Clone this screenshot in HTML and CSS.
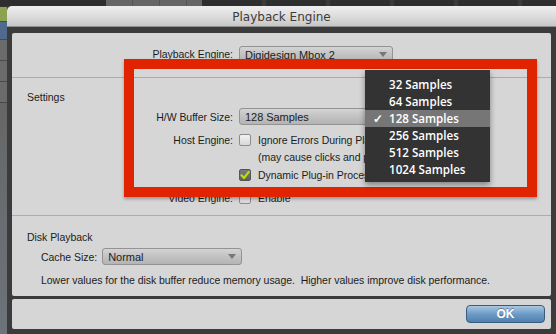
FILE: index.html
```html
<!DOCTYPE html>
<html lang="en">
  <head>
    <meta charset="UTF-8" />
    <meta name="viewport" content="width=device-width, initial-scale=1.0" />
    <title>Playback Engine</title>
    <link rel="stylesheet" href="styles.css">
  </head>

  <body>
    <div class="screen">
      <!-- Background app behind the dialog -->
      <div class="topbar">
        <span class="tb-dark"></span>
        <span class="tb-light"></span>
        <span class="tb-dark"></span>
      </div>
      <div class="sidebar">
        <span class="strip strip-gap"></span>
        <span class="strip strip-green"></span>
        <span class="strip strip-blue"></span>
        <span class="strip strip-gray"></span>
        <span class="strip strip-gray"></span>
        <span class="strip strip-gray"></span>
        <span class="strip strip-low"></span>
      </div>

      <!-- Dialog -->
      <div class="dialog">
        <div class="titlebar">Playback Engine</div>

        <div class="panel">
          <div class="engine-row row">
            <span class="label">Playback Engine:</span>
            <div class="popup">Digidesign Mbox 2</div>
          </div>

          <div class="group settings">
            <div class="group-title">Settings</div>
            <div class="row hw-row">
              <span class="label">H/W Buffer Size:</span>
              <div class="popup">128 Samples</div>
            </div>
            <div class="row check-row host-row">
              <span class="label">Host Engine:</span>
              <span class="checkbox"></span>
              <span class="clip">Ignore Errors During Playback/Record</span>
            </div>
            <div class="row check-row">
              <span class="label"></span>
              <span class="clip note">(may cause clicks and pops)</span>
            </div>
            <div class="row check-row dyn-row">
              <span class="label"></span>
              <span class="checkbox checked">
                <svg viewBox="0 0 12 12" width="12" height="12">
                  <path d="M2.5 6.2 L5 9 L9.8 2.8" fill="none" stroke="#b6e000" stroke-width="2.2" stroke-linecap="round" stroke-linejoin="round" />
                </svg>
              </span>
              <span class="clip">Dynamic Plug-in Processing</span>
            </div>
            <div class="row check-row video-row">
              <span class="label">Video Engine:</span>
              <span class="checkbox"></span>
              <span>Enable</span>
            </div>
          </div>

          <div class="group disk">
            <div class="group-title">Disk Playback</div>
            <div class="cache-row">
              <span>Cache Size:</span>
              <div class="popup small">Normal</div>
            </div>
            <p class="hint">Lower values for the disk buffer reduce memory usage.&nbsp; Higher values improve disk performance.</p>
          </div>
        </div>

        <div class="footer">
          <button class="ok">OK</button>
        </div>
      </div>

      <!-- Annotation and open menu lie over the dialog -->
      <div class="highlight-box"></div>
      <ul class="menu">
        <li>32 Samples</li>
        <li>64 Samples</li>
        <li class="selected"><span class="tick">&#10003;</span>128 Samples</li>
        <li>256 Samples</li>
        <li>512 Samples</li>
        <li>1024 Samples</li>
      </ul>
    </div>
  </body>
</html>
```

FILE: styles.css
```css
/* General */

body {
  margin: 0;
  padding: 0;
  background-color: #333;
  font-family: "Liberation Sans", Arial, sans-serif;
  font-size: 10.5px;
  letter-spacing: -0.04px;
  color: #1c1c1c;
}

.screen {
  position: relative;
  width: 556px;
  height: 334px;
  overflow: hidden;
  display: grid;
  grid-template-columns: 7px 1fr;
  grid-template-rows: 6px 1fr;
}

/* Background app */

.topbar {
  grid-column: 1 / 3;
  display: flex;
  background: #2c2c2c;
}

.tb-dark {
  width: 106px;
  background: #2e2e2e;
}

.tb-light {
  width: 96px;
  background: repeating-linear-gradient(90deg, #666 0, #666 26px, #555 26px, #555 27px);
}

.tb-dark:last-child {
  flex: 1;
  background: repeating-linear-gradient(90deg, #2e2e2e 0, #2e2e2e 60px, #3b3b3b 60px, #3b3b3b 64px);
}

.sidebar {
  display: flex;
  flex-direction: column;
  background: #63676d;
}

.strip {
  display: block;
  border-bottom: 1px solid #4a4a4a;
}

.strip-gap {
  height: 1px;
  background: #333;
  border: none;
}

.strip-green {
  height: 14px;
  background: #8ba251;
}

.strip-blue {
  height: 17px;
  background: #4f6a8d;
}

.strip-gray {
  height: 20px;
  background: #6b6b6b;
}

.strip-low {
  flex: 1;
  background: linear-gradient(#666, #6d737b);
  border: none;
}

/* Dialog */

.dialog {
  display: flex;
  flex-direction: column;
  background: #3b3b3b;
}

.titlebar {
  height: 21px;
  line-height: 22px;
  text-align: center;
  font-family: "DejaVu Sans", sans-serif;
  font-size: 12px;
  letter-spacing: 0;
  color: #3c3c3c;
  background: linear-gradient(#efefef, #d9d9d9 60%, #c6c6c6);
  border-top-left-radius: 5px;
  border-bottom: 1px solid #8e8e8e;
  box-sizing: border-box;
}

.panel {
  height: 263px;
  margin: 6px 5px 0 5px;
  background: #d6d6d6;
  border-radius: 2px;
}

.footer {
  height: 30px;
  margin: 3px 5px 5px 5px;
  background: #d6d6d6;
  border-radius: 2px;
  display: flex;
  align-items: center;
  justify-content: flex-end;
  padding-right: 6px;
}

/* Rows */

.row {
  display: flex;
  align-items: center;
  gap: 5px;
}

.label {
  width: 221px;
  flex-shrink: 0;
  text-align: right;
}

.engine-row {
  height: 45px;
  padding-top: 13px;
  align-items: flex-start;
  box-sizing: border-box;
  border-bottom: 1px solid #ababab;
}

.engine-row .label {
  line-height: 17px;
}

.group {
  border-bottom: 1px solid #ababab;
}

.group-title {
  height: 14px;
  line-height: 14px;
  padding-left: 15px;
}

.settings {
  height: 138px;
  padding-top: 12px;
  box-sizing: border-box;
}

.hw-row {
  margin-top: 4px;
}

.check-row {
  height: 17px;
  white-space: nowrap;
}

.check-row .checkbox {
  margin-left: 1px;
}

/* text running under the open menu is cut at its left edge */
.clip {
  width: 107px;
  overflow: hidden;
}

.host-row {
  margin-top: 6px;
}

.note {
  margin-left: 20px;
}

.dyn-row {
  margin-top: 1px;
}

.video-row {
  margin-top: 6px;
}

.disk {
  border-bottom: none;
  padding-top: 14px;
}

.cache-row {
  display: flex;
  align-items: center;
  gap: 4px;
  margin-top: 4px;
  padding-left: 29px;
}

.hint {
  margin: 8px 0 0 29px;
  line-height: 14px;
}

/* Controls */

.popup {
  position: relative;
  width: 154px;
  height: 17px;
  line-height: 17px;
  box-sizing: border-box;
  padding-left: 5px;
  border: 1px solid #939393;
  border-radius: 3px;
  background: linear-gradient(#d4d4d4, #c2c2c2 50%, #b4b4b4);
  margin-left: 1px;
  font-size: 11px;
}

.popup::after {
  content: "";
  position: absolute;
  right: 5px;
  top: 5px;
  border-left: 4px solid transparent;
  border-right: 4px solid transparent;
  border-top: 5px solid #777;
}

.popup.small {
  width: 140px;
}

.checkbox {
  width: 12px;
  height: 12px;
  box-sizing: border-box;
  border: 1px solid #8c8c8c;
  border-radius: 2px;
  background: linear-gradient(#f2f2f2, #d8d8d8);
  margin-right: 2px;
  flex-shrink: 0;
}

.checkbox.checked {
  background: linear-gradient(#7c7c7c, #5e5e5e);
  border-color: #555;
  position: relative;
}

.checkbox.checked svg {
  position: absolute;
  left: -1px;
  top: -1px;
}

.ok {
  width: 79px;
  height: 18px;
  padding: 0;
  border: 1px solid #3a5c80;
  border-radius: 4px;
  background: linear-gradient(#a9c7e4, #6d9bc6 50%, #4e7fae);
  color: white;
  font-family: "Liberation Sans", Arial, sans-serif;
  font-weight: bold;
  font-size: 12px;
  text-shadow: 0 -1px 0 rgba(0, 0, 0, 0.35);
}

/* Overlays */

.highlight-box {
  position: absolute;
  left: 124px;
  top: 59px;
  width: 413px;
  height: 138px;
  box-sizing: border-box;
  border: 10px solid #e12400;
  box-shadow: 0 2px 3px rgba(0, 0, 0, 0.3);
}

.menu {
  position: absolute;
  left: 365px;
  top: 70px;
  width: 125px;
  height: 112px;
  box-sizing: border-box;
  margin: 0;
  padding: 6px 0 4px 0;
  list-style: none;
  background: rgba(44, 44, 44, 0.96);
  box-shadow: 0 3px 6px rgba(0, 0, 0, 0.4);
  font-family: "Open Sans", sans-serif;
  font-weight: 600;
  font-size: 11.6px;
  letter-spacing: 0;
  color: white;
}

.menu li {
  position: relative;
  height: 17px;
  line-height: 17px;
  padding-left: 24px;
}

.menu li.selected {
  background: #767676;
}

.tick {
  position: absolute;
  left: 8px;
}
```
